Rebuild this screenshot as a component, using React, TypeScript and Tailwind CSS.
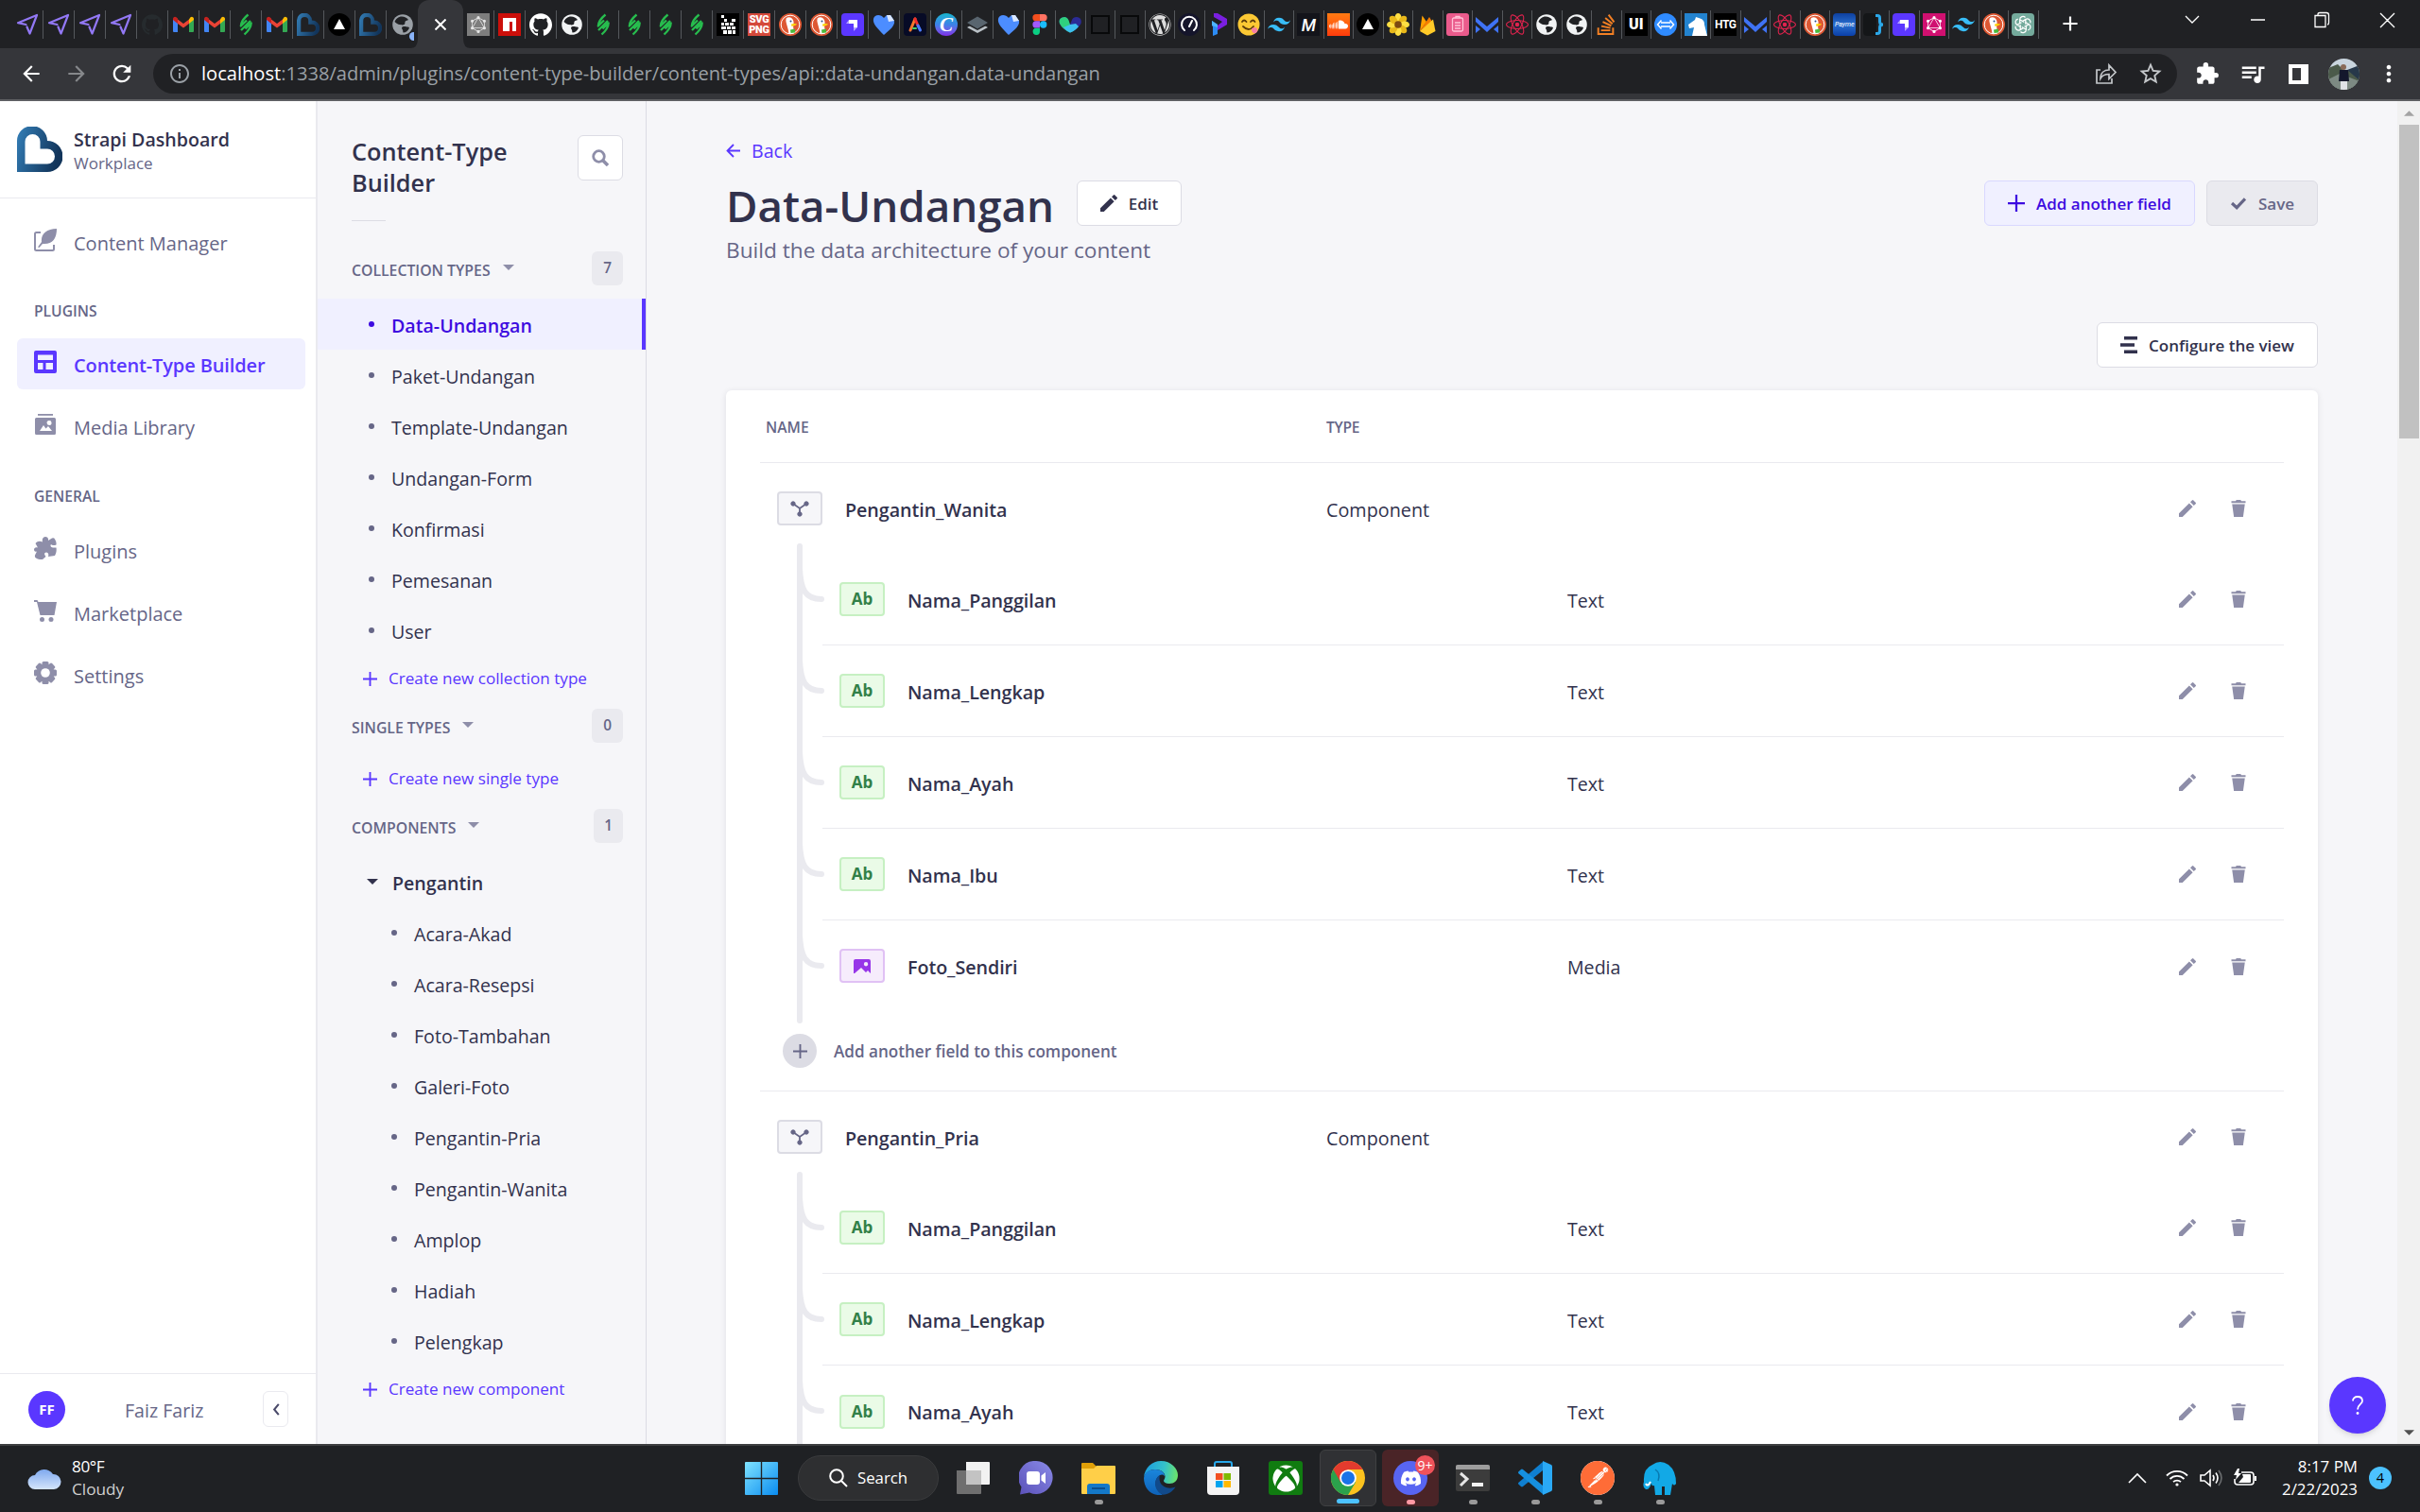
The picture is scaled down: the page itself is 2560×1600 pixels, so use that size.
import React from "react";
import {
  SiGraphql, SiGithub, SiTailwindcss, SiReact, SiStackoverflow,
  SiSoundcloud, SiPostman,
} from "react-icons/si";
import { FaWordpress, FaXbox, FaDiscord } from "react-icons/fa";
import {
  MdExtension, MdQueueMusic, MdStarBorder, MdOutlineInfo, MdArrowBack, MdArrowForward, MdRefresh,
  MdMoreVert, MdAdd,
} from "react-icons/md";

/* ---------- favicons ---------- */

const Vector = ({ vb = "0 0 24 24", className = "size-6", children }: { vb?: string; className?: string; children: React.ReactNode }) => (
  <svg viewBox={vb} className={className} fill="none">{children}</svg>
);

const Plane = () => (
  <Vector><path d="M10.500 12 2 10.200 22 2 14.500 21.500 11.500 14.500" stroke="#9278f5" strokeWidth="2.200" strokeLinejoin="round" strokeLinecap="round" /></Vector>
);
const Gmail = () => (
  <Vector>
    <path d="M1 6v13a1 1 0 0 0 1 1h4V10z" fill="#4285f4" />
    <path d="M23 6v13a1 1 0 0 1-1 1h-4V10z" fill="#34a853" />
    <path d="M18 6.500V11l5-4V6c0-2-2-3-3.500-1.800z" fill="#fbbc04" />
    <path d="M6 6.500l6 4.500 6-4.500V11l-6 4.600L6 11z" fill="#ea4335" />
    <path d="M1 7V6c0-2 2-3 3.500-1.800L6 5.500V11z" fill="#c5221f" />
  </Vector>
);
const Stripes = () => (
  <Vector>
    <path d="M14.500 1.500C9 6 7 9 6.800 13.500l6.200-6M7 18l10-10M10.500 22.500c5-4.500 7-7.500 7.200-12l-6.200 6" stroke="#27bd4e" strokeWidth="2.300" strokeLinejoin="round" />
  </Vector>
);
const BLogo = ({ className = "size-6" }: { className?: string }) => (
  <Vector vb="0 0 48 48" className={className}>
    <defs>
      <linearGradient id="blogo" x1="0" y1="0" x2="1" y2="0.300">
        <stop offset="0" stopColor="#347fb8" /><stop offset="1" stopColor="#12355b" />
      </linearGradient>
    </defs>
    <path fillRule="evenodd" fill="url(#blogo)" d="M0 48V15.500a16 16 0 0 1 32-.5 16.500 16.500 0 0 1 0 33zM8.500 39.500H32a8 8 0 0 0 0-16h-7.500V16a8 8 0 0 0-16 0z" />
  </Vector>
);
const Vercel = () => (
  <Vector><circle cx="12" cy="12" r="12" fill="#000" /><path d="M12 6l6 11H6z" fill="#fff" /></Vector>
);
const Globe = ({ dim = false }: { dim?: boolean }) => (
  <div className={dim ? "text-[#9aa0a6]" : "text-[#f1f3f4]"}>
    <Vector>
      <circle cx="12" cy="12" r="10.800" fill="currentColor" />
      <path d="M11 3.500c3 0 5.500 1.500 7 3.500-1 1-3 .5-3.500 2s.5 2-1 3-4 0-5 0-4-2-5-3c1-3 4-5.500 7.500-5.500zM13 14c2 0 6 .5 6 1.500-1 3-4 5-6.500 5C12 19 12.500 18 11.500 17s-.5-3 1.500-3z" fill="#202124" />
    </Vector>
  </div>
);
const LoadingGlobe = () => (
  <div className="relative"><Globe dim /><span className="absolute right-0 bottom-[-5px] h-[9px] w-[5px] rounded-l-full bg-[#8ab4f8]" /></div>
);
const Tile = ({ className, children }: { className: string; children?: React.ReactNode }) => (
  <div className={"flex size-6 items-center justify-center overflow-hidden " + className}>{children}</div>
);
const Npm = () => (
  <Tile className="bg-[#cb0f0a]"><svg viewBox="0 0 24 24" className="size-6"><path d="M5 5h14v14h-4V9h-3v10H5z" fill="#fff" /></svg></Tile>
);
const Blocks = () => (
  <Tile className="bg-black">
    <svg viewBox="0 0 24 24" className="size-6" fill="#fff">
      <path d="M5 2h3v3H5zM8 6h3v3H8zM5 10h3v3H5zM9 10h4v3H9zM14 10h4v3h-4zM16 6h4v3h-4zM5 14h5v3H5zM11 14h4v3h-4zM16 14h4v3h-4zM7 18h4v4H7zM12 18h4v4h-4zM17 18h3v4h-3z" />
    </svg>
  </Tile>
);
const SvgPng = () => (
  <Tile className="flex-col bg-[#d4493b] font-['Roboto'] text-[11px] leading-[11px] font-black tracking-[-0.3px] text-white"><span>SVG</span><span>PNG</span></Tile>
);
const Duck = () => (
  <Vector>
    <circle cx="12" cy="12" r="12" fill="#de5833" />
    <circle cx="12" cy="12" r="9.800" stroke="#fff" strokeWidth="1" />
    <path d="M8 5c3-2 7 0 7.500 4 .3 3-.5 4-.3 6l1 6c-2 1-4 1-5.700.5C10 17 8 12 7.500 9c-.2-2 0-3 .5-4z" fill="#fff" />
    <path d="M13 11.500c2-1 5-.5 6 0-1 1.500-3 1.500-5.500 2.500z" fill="#fdd20a" />
    <path d="M12 17.500l5-1v4l-4.500.5z" fill="#4cba3c" />
    <circle cx="12.500" cy="8.500" r="1" fill="#2d4f8e" />
  </Vector>
);
const Strapi = () => (
  <Tile className="rounded-[4px] bg-[#5b37ff]">
    <svg viewBox="0 0 24 24" className="size-6"><path d="M8 7h9v8h-4v-4H8z" fill="#fff" /><path d="M8 7v4H5zM13 15h4l-4 4z" fill="#b4a3ff" /></svg>
  </Tile>
);
const BlueHeart = () => (
  <Vector><path d="M12 23C5 16 0 11 1 6c1-5 8-5 11-1l3-3h4l4 6c1 5-4 9-11 15z" fill="#4c8dff" /><path d="M15 2h4l4 6-6 1z" fill="#dbe8ff" /></Vector>
);
const AdobeA = () => (
  <Tile className="rounded-[4px] bg-[#070b26]">
    <svg viewBox="0 0 24 24" className="size-6" fill="none" strokeWidth="3" strokeLinecap="round">
      <path d="M12 6 7 18" stroke="#f9772a" /><path d="M12 6l3 7" stroke="#f02c2c" /><path d="M15 13l2.500 5" stroke="#4a7dff" /><path d="M10 16h3" stroke="#43d06c" strokeWidth="2" />
    </svg>
  </Tile>
);
const Canva = () => (
  <Tile className="rounded-full bg-linear-to-b from-[#13b5cd] via-[#3b82e8] to-[#7d2ae8] font-['Liberation_Serif'] text-[21px] leading-none font-bold text-white italic">C</Tile>
);
const Layers = () => (
  <Vector><path d="M1 15l11-6 11 6-11 6z" fill="#b9c0c6" /><path d="M0 11.500 12 5l12 6.500L12 18z" fill="#202124" /><path d="M1 10l11-6.500L23 10l-11 6.500z" fill="#59656f" /></Vector>
);
const Figma = () => (
  <Vector>
    <path d="M8 1h4v7.300H8A3.600 3.600 0 0 1 8 1z" fill="#f24e1e" /><path d="M12 1h4a3.600 3.600 0 0 1 0 7.300h-4z" fill="#ff7262" />
    <path d="M8 8.300h4v7.300H8a3.600 3.600 0 0 1 0-7.300z" fill="#a259ff" /><circle cx="15.700" cy="12" r="3.700" fill="#1abcfe" />
    <path d="M8 15.700h4v3.600a3.700 3.700 0 1 1-4-3.600z" fill="#0acf83" />
  </Vector>
);
const GreenHeart = () => (
  <Vector>
    <path d="M6 4q3 0 4 3l2 5 2-5q1-3 5-3 6 1 4.500 7Q20 17 12 20.500 4 17 1 11-1 5 6 4z" fill="#2b2b96" />
    <path d="M6 4q3 0 4.500 3.500L12 12l5 5.500q-2 2-5 3Q4 17 1 11-1 5 6 4z" fill="#2fd07e" />
    <path d="M5 15l7-3 6-1 3 3q-3 4-9 6.500-5-2.500-7-5.500z" fill="#3dbff0" />
  </Vector>
);
const DarkBox = () => <div className="h-5 w-5 border-2 border-[#08090a] bg-[#202124]" />;
const Gauge = () => (
  <Tile className="rounded-full bg-[#15152b]">
    <svg viewBox="0 0 24 24" className="size-6" fill="none" stroke="#fff" strokeWidth="2"><path d="M7 18a8 8 0 1 1 10 0M12 14l3-6" strokeLinecap="round" /></svg>
  </Tile>
);
const PMark = () => (
  <Vector><path d="M6 0h4l10 6v6L10 18v-5l5-4-9-5z" fill="#7a1fe0" /><path d="M4 8l6 4v10l-5 2V14l-1-1z" fill="#2c8cf4" /><path d="M4 8l6 4v3l-6-2z" fill="#4db4ff" /></Vector>
);
const Smile = () => (
  <Vector>
    <circle cx="12" cy="12" r="11.500" fill="#fcc934" />
    <path d="M5 9q2-3 4.500 0M14 9q2.500-3 4.500 0M6 14q6 6 11 0" stroke="#5c3d0b" strokeWidth="1.800" strokeLinecap="round" />
    <path d="M15 16l4-1c3 1 3 5 0 6s-4-2-4-5z" fill="#f47ea5" />
  </Vector>
);
const MTile = () => <Tile className="bg-[#13141a] font-['Roboto'] text-[18px] font-medium tracking-tight text-white italic">M</Tile>;
const Soundcloud = () => <Tile className="bg-linear-to-b from-[#ff7a12] to-[#ff3a0c]"><SiSoundcloud className="size-5 text-white" /></Tile>;
const Flower = () => (
  <Vector>
    {[0, 45, 90, 135, 180, 225, 270, 315].map((a) => (
      <ellipse key={a} cx="12" cy="5" rx="3.600" ry="5" fill={a % 90 ? "#e8b81a" : "#ffdf43"} transform={`rotate(${a} 12 12)`} />
    ))}
    <circle cx="12" cy="12" r="3.800" fill="#7c4a12" />
  </Vector>
);
const Firebase = () => (
  <Vector><path d="M4 19L6.500 2.500 11 9z" fill="#ffa000" /><path d="M4 19L14 4l3 5z" fill="#f57c00" /><path d="M4 19L18 6.500 20.500 19 12 23.500z" fill="#ffca28" /></Vector>
);
const Clipboard = () => (
  <Tile className="rounded-[3px] bg-[#ea5b8c]">
    <svg viewBox="0 0 24 24" className="size-6" fill="none" stroke="#ffc4d8" strokeWidth="1.300"><rect x="6.500" y="5" width="11" height="14" rx="1.500" /><path d="M10 5V3.500h4V5M9 10h6M9 13h6M9 16h6" /></svg>
  </Tile>
);
const BlueM = () => (
  <Vector><path d="M0 4l12 10L24 4v5L12 20 0 9z" fill="#3f73f5" /><path d="M0 13l5 4-5 4zM24 13l-5 4 5 4z" fill="#3f73f5" /></Vector>
);
const ReactPink = () => <SiReact className="size-6 text-[#e0234e]" />;
const UiTile = () => <Tile className="bg-black font-['Roboto'] text-[16px] font-black text-white">UI</Tile>;
const Arrows = () => (
  <Tile className="rounded-full bg-[#2f8bff]"><svg viewBox="0 0 24 24" className="size-6" fill="none" stroke="#fff" strokeWidth="1.500"><path d="M7 10h10M7 14h10M7.500 7.500 3.500 12l4 4.500M16.500 7.500l4 4.500-4 4.500" /></svg></Tile>
);
const Bear = () => (
  <Tile className="bg-[#2383cf]"><svg viewBox="0 0 24 24" className="size-6" fill="#fff"><path d="M4 12l7-5 1-3 3 1c4 1 6 3 6 7l3 12H8l2-9-5 1z" /></svg></Tile>
);
const Htg = () => <Tile className="bg-black font-['Roboto'] text-[12px] font-bold tracking-[-0.5px] text-white">HTG</Tile>;
const Payme = () => <Tile className="rounded-[4px] bg-linear-to-b from-[#0e3f9e] via-[#2a6fd0] to-[#0b3fa8] font-['Roboto'] text-[7px] text-white italic">Payme</Tile>;
const Brace = () => (
  <Tile className="rounded-l-[4px] bg-linear-to-r from-[#141618] from-60% to-[#202124] to-60%">
    <svg viewBox="0 0 24 24" className="size-6" fill="none" stroke="#2ba7e8" strokeWidth="3"><path d="M13 2.500h2q2.500 0 2.500 2.500v4q0 3 3.500 3-3.500 0-3.500 3v4q0 2.500-2.500 2.500h-2" /></svg>
  </Tile>
);
const OpenAi = () => (
  <Tile className="rounded-[4px] bg-[#74aa9c]">
    <svg viewBox="0 0 24 24" className="size-5" fill="none" stroke="#fff" strokeWidth="1.500">
      {[0, 60, 120, 180, 240, 300].map((a) => <path key={a} transform={`rotate(${a} 12 12)`} d="M8 10.500V5.500a4 4 0 0 1 7-2.500M8 5.800l5.500 3.200" />)}
    </svg>
  </Tile>
);

const tabsLeft = [Plane, Plane, Plane, Plane, () => <SiGithub className="size-[22px] text-[#262b2e]" />, Gmail, Gmail, Stripes, Gmail, BLogo, Vercel, BLogo, LoadingGlobe];
const tabsMiddle = [
  () => <Tile className="bg-[#7d7d7d]"><SiGraphql className="size-[18px] text-white/80" /></Tile>,
  Npm, () => <SiGithub className="size-6 text-white" />, Globe, Stripes, Stripes, Stripes, Stripes, Blocks, SvgPng, Duck, Duck, Strapi, BlueHeart, AdobeA, Canva, Layers, BlueHeart, Figma,
];
const tabsRight = [
  GreenHeart, DarkBox, DarkBox, () => <FaWordpress className="size-6 text-[#dcdcdc]" />, Gauge, PMark, Smile,
  () => <SiTailwindcss className="size-6 text-[#38bdf8]" />, MTile, Soundcloud, Vercel, Flower, Firebase, Clipboard, BlueM, ReactPink, Globe, Globe,
  () => <SiStackoverflow className="size-[22px] text-[#f48024]" />, UiTile, Arrows, Bear, Htg, BlueM, ReactPink, Duck, Payme, Brace, Strapi,
  () => <Tile className="bg-[#d01070]"><SiGraphql className="size-[18px] text-white" /></Tile>,
  () => <SiTailwindcss className="size-6 text-[#38bdf8]" />, Duck, OpenAi,
];

function Tab({ icon: Icon, narrow = false, last = false }: { icon: React.ComponentType<any>; narrow?: boolean; last?: boolean }) {
  return (
    <div className={"flex h-[30px] shrink-0 items-center justify-center " + (narrow ? "w-[31.5px] " : "w-[33px] ") + (last ? "" : "border-r border-[#55585c]")}>
      <Icon />
    </div>
  );
}

function Browser() {
  return (
    <header className="shrink-0 text-white">
      <div className="flex h-[51px] items-start bg-[#202124] pl-[13px]">
        <div className="flex pt-[11px]">{tabsLeft.map((I, i) => <Tab key={i} icon={I} last={i === 12} />)}</div>
        <div className="relative flex h-[51px] w-[48px] shrink-0 items-center justify-center rounded-t-[12px] bg-[#35363a]">
          <svg viewBox="0 0 64 12" className="absolute -left-2 bottom-0 h-3 w-16" fill="#35363a"><path d="M0 12q8 0 8-10v10zM64 12q-8 0-8-10v10z" /></svg>
          <svg viewBox="0 0 12 12" className="size-3" stroke="#fff" strokeWidth="2"><path d="M.5.5l11 11M11.500.5l-11 11" /></svg>
        </div>
        <div className="flex pt-[11px]">{tabsMiddle.map((I, i) => <Tab key={i} icon={I} />)}</div>
        <div className="flex pt-[11px]">{tabsRight.map((I, i) => <Tab key={i} icon={I} narrow />)}</div>
        <MdAdd className="mt-[12px] ml-[20px] size-[26px]" />
        <svg viewBox="0 0 224 18" className="mt-[12px] ml-[108px] h-[18px] w-[224px]" fill="none" stroke="#fff" strokeWidth="1.300">
          <path d="M1 5l7 7 7-7M70 9h15M138 4.500h11v12h-11zM141 4V3q0-1.500 2-1.500h7q2.500 0 2.500 2.500v8q0 2-1.500 2M207 2l15 15M222 2l-15 15" />
        </svg>
      </div>
      <div className="flex h-[54px] items-center bg-[#35363a] pl-5">
        <MdArrowBack className="size-[26px]" />
        <MdArrowForward className="ml-[22px] size-[26px] text-[#86888b]" />
        <MdRefresh className="ml-[21px] size-[28px]" />
        <div className="ml-[19px] flex h-[42px] w-[2141px] items-center rounded-full bg-[#202124] pr-[14px] pl-[16px]">
          <MdOutlineInfo className="size-6 text-[#9aa0a6]" />
          <div className="ml-[11px] flex-1 pt-px text-[20.100px] text-[#9aa0a6]"><span className="text-white">localhost</span>:1338/admin/plugins/content-type-builder/content-types/api::data-undangan.data-undangan</div>
          <svg viewBox="0 0 24 24" className="size-6" fill="none" stroke="#c4c7ca" strokeWidth="1.700"><path d="M6 8H2v14h16v-5M6 17c0-6 4-9 9-9V3l7 7.500-7 7v-5c-4 0-7 1-9 4.500z" /></svg>
          <MdStarBorder className="ml-[21px] size-[28px] text-[#c4c7ca]" />
        </div>
        <MdExtension className="ml-[19px] size-[26px]" />
        <MdQueueMusic className="ml-[20px] size-[30px]" />
        <div className="ml-[23px] size-[21px] border-4 border-r-8 border-white" />
        <svg viewBox="0 0 33 33" className="ml-[21px] size-[33px] rounded-full bg-[#c9d5de]">
          <path d="M0 10l10-4 8 8 15-6v25H0z" fill="#4b5a4a" /><path d="M20 12l13-5v16z" fill="#27384a" /><path d="M0 22l12-6 21 8v9H0z" fill="#7d8a83" />
          <circle cx="16" cy="9" r="3" fill="#8a6b58" /><path d="M12 12h9l1 12H11z" fill="#14182c" /><path d="M13 24h7v9h-7z" fill="#dfe2e6" />
        </svg>
        <MdMoreVert className="ml-[17px] size-[28px]" />
      </div>
      <div className="h-0.5 bg-[#5f6063]" />
    </header>
  );
}

/* ---------- app icons ---------- */

const Pencil = ({ className }: { className: string }) => (
  <svg viewBox="0 0 24 24" className={className} fill="currentColor"><path d="M0 19v5h5L19.500 9.500l-5-5zM16 3l5 5 2.500-2.500q1-1 0-2L20.500.5q-1-1-2 0z" /></svg>
);
const Trash = ({ className }: { className: string }) => (
  <svg viewBox="0 0 24 24" className={className} fill="currentColor"><path d="M2 1.500h6L9 0h6l1 1.500h6v2.700H2zM3 6h18l-2.500 18h-13z" /></svg>
);
const Plus = ({ className }: { className: string }) => (
  <svg viewBox="0 0 16 16" className={className} fill="currentColor"><path d="M7 0h2v7h7v2H9v7H7V9H0V7h7z" /></svg>
);
const Caret = ({ className }: { className: string }) => (
  <svg viewBox="0 0 12 6" className={className} fill="currentColor"><path d="M0 0h12L6 6z" /></svg>
);
const Feather = () => (
  <Vector className="size-6"><path d="M7 4H2.500Q1 4 1 5.500v16Q1 23 2.500 23h17q1.500 0 1.500-1.500V17" stroke="currentColor" strokeWidth="2" /><path d="M24 0c0 11-5 17-15 16l-3.500 4L4 19.500 8 14C7 6 13 0 24 0z" fill="currentColor" /></Vector>
);
const LayoutIcon = () => (
  <Vector className="size-6"><path fillRule="evenodd" fill="currentColor" d="M2 0h20q2 0 2 2v20q0 2-2 2H2q-2 0-2-2V2Q0 0 2 0zm2 4.500v5.500h16V4.500zM4 13v7h5.500v-7zm8.500 0v7H20v-7z" /></Vector>
);
const Media = () => (
  <Vector className="size-6"><path d="M4 1h16v1.800H4z" fill="currentColor" /><path fillRule="evenodd" fill="currentColor" d="M2.500 5h19q1.500 0 1.500 1.500v15q0 1.500-1.500 1.500h-19Q1 23 1 21.500v-15Q1 5 2.500 5zM6 19h13l-4-5-2.500 2.500L10 13zM16 8a2.500 2.500 0 1 0 .1 5A2.500 2.500 0 0 0 16 8z" /></Vector>
);
const Puzzle = () => (
  <Vector className="size-6">
    <path fill="currentColor" d="M9 5.500C8 2 10 0 12 0s3.500 1.500 3 4l4-2.500q2-1 3 1 2 3 1.500 6c-2.500 1-4.500.5-5.500-.5-1.500 2 0 4 5.500 3.500.5 3 0 6-1.500 8.500l-7 1c1-3-.5-4.500-2-4.500s-2.500 1.500-1.500 3l1 1.500L9 24q-4 .5-7-1.500-1.500-1-1-3l2-4C1 16.500 0 15 0 13.500S1.500 10.500 4 11.500L1.500 7 3 5.500q3-1.500 6 0z" />
  </Vector>
);
const Cart = () => (
  <Vector className="size-6"><path d="M0 1h3.500l1 2H24l-2.500 14H6.500L3 3H0z" fill="currentColor" /><circle cx="8.500" cy="21.500" r="2.500" fill="currentColor" /><circle cx="18" cy="21.500" r="2.500" fill="currentColor" /></Vector>
);
const Gear = () => (
  <Vector className="size-6">
    <g fill="currentColor">{[0, 45, 90, 135].map((a) => <rect key={a} x="8.500" y="0" width="7" height="24" rx="1.500" transform={`rotate(${a} 12 12)`} />)}<circle cx="12" cy="12" r="9.500" /></g>
    <circle cx="12" cy="12" r="4.800" fill="#fff" />
  </Vector>
);

/* ---------- left navigation ---------- */

function NavItem({ icon: Icon, label, active = false }: { icon: React.ComponentType; label: string; active?: boolean }) {
  return (
    <div className={"flex h-[54px] items-center rounded-[6px] pl-[18px] " + (active ? "bg-[#f0f0ff] font-semibold" : "text-[#666687]")}>
      <div className={"mb-1 flex w-6 justify-center " + (active ? "text-[#5a37ff]" : "text-[#8e8ea9]")}><Icon /></div>
      <span className={"ml-[18px] pt-[3px] text-[20px] " + (active ? "text-[#5a37ff] tracking-[-0.120px]" : "")}>{label}</span>
    </div>
  );
}

function MainNav() {
  return (
    <nav className="flex w-[336px] shrink-0 flex-col border-r-2 border-[#eaeaef] bg-white">
      <div className="flex h-[103px] shrink-0 items-center border-b border-[#eaeaef] pl-[18px]">
        <BLogo className="size-12" />
        <div className="ml-3 pt-[3px]">
          <div className="text-[19.600px] leading-[26px] font-semibold text-[#32324d]">Strapi Dashboard</div>
          <div className="text-[17px] leading-6 text-[#666687]">Workplace</div>
        </div>
      </div>
      <div className="flex flex-1 flex-col px-[18px] pt-[19px] pr-[11px]">
        <NavItem icon={Feather} label="Content Manager" />
        <div className="mt-[34px] mb-[17px] pl-[18px] text-[15.600px] leading-[24px] font-semibold text-[#666687]">PLUGINS</div>
        <NavItem icon={LayoutIcon} label="Content-Type Builder" active />
        <div className="h-3" />
        <NavItem icon={Media} label="Media Library" />
        <div className="mt-[35px] mb-[18px] pl-[18px] text-[15.600px] leading-[24px] font-semibold text-[#666687]">GENERAL</div>
        <div className="flex flex-col gap-3">
          <NavItem icon={Puzzle} label="Plugins" />
          <NavItem icon={Cart} label="Marketplace" />
          <NavItem icon={Gear} label="Settings" />
        </div>
      </div>
      <div className="flex h-[75px] shrink-0 items-center border-t border-[#eaeaef] pl-[30px]">
        <div className="flex size-[39px] items-center justify-center rounded-full bg-[#5a37ff] pt-px text-[15px] font-bold text-white">FF</div>
        <span className="ml-[63px] w-[146px] pt-[3px] text-[19.600px] text-[#666687]">Faiz Fariz</span>
        <div className="flex h-[38px] w-[27px] items-center justify-center rounded-[6px] border border-[#eaeaef]">
          <svg viewBox="0 0 8 14" className="h-[13px] w-2" fill="none" stroke="#4a4a6a" strokeWidth="2.200"><path d="M7 1L2 7l5 6" /></svg>
        </div>
      </div>
    </nav>
  );
}

/* ---------- content type list ---------- */

function SubHeader({ title, count }: { title: string; count: string }) {
  return (
    <div className="flex h-9 items-center pr-6 pl-9">
      <span className="pt-[5px] text-[15.800px] font-semibold text-[#666687]">{title}</span>
      <Caret className="mb-[3px] ml-[13px] h-1.5 w-[12px] text-[#8e8ea9]" />
      <span className={"ml-auto flex h-9 items-center rounded-[6px] bg-[#eaeaef] text-[15.400px] font-semibold text-[#666687] " + (count === "1" ? "px-[11px]" : "px-3")}>{count}</span>
    </div>
  );
}
function SubItem({ label, active = false, nested = false }: { label: string; active?: boolean; nested?: boolean }) {
  return (
    <div className={"flex h-[54px] items-center " + (nested ? "pl-[78px] " : "pl-[54px] ") + (active ? "border-r-4 border-[#5a37ff] bg-[#f0f0ff] font-semibold text-[#3d0be0]" : "text-[#32324d]")}>
      <span className={"mb-px size-1.5 rounded-full " + (active ? "bg-[#3d0be0]" : "bg-[#666687]")} />
      <span className="ml-[18px] pt-1 text-[19.600px]">{label}</span>
    </div>
  );
}
function Create({ label, className }: { label: string; className: string }) {
  return (
    <div className={"flex h-6 items-center pl-12 text-[#5a37ff] " + className}>
      <Plus className="size-[15px]" /><span className="ml-3 text-[17.100px]">{label}</span>
    </div>
  );
}
function SubNav() {
  return (
    <aside className="flex w-[348px] shrink-0 flex-col border-r border-[#dcdce4] bg-[#f6f6f9]">
      <div className="flex justify-between pt-9 pr-6 pl-9">
        <h2 className="w-[200px] pt-px text-[25.300px] leading-[33px] font-semibold text-[#32324d]">Content-Type Builder</h2>
        <div className="flex size-12 items-center justify-center rounded-[6px] border border-[#dcdce4] bg-white text-[#8e8ea9]">
          <svg viewBox="0 0 18 18" className="size-[18px]" fill="none" stroke="currentColor"><circle cx="7.500" cy="7.500" r="5.800" strokeWidth="2.800" /><path d="M12 12l5 5" strokeWidth="3.500" /></svg>
        </div>
      </div>
      <div className="mt-[23px] ml-9 h-px w-9 shrink-0 bg-[#dcdce4]" />
      <div className="mt-8"><SubHeader title="COLLECTION TYPES" count="7" /></div>
      <div className="mt-[14px]">
        <SubItem label="Data-Undangan" active />
        {["Paket-Undangan", "Template-Undangan", "Undangan-Form", "Konfirmasi", "Pemesanan", "User"].map((l) => <SubItem key={l} label={l} />)}
      </div>
      <Create label="Create new collection type" className="mt-[12px]" />
      <div className="mt-5"><SubHeader title="SINGLE TYPES" count="0" /></div>
      <Create label="Create new single type" className="mt-[26px]" />
      <div className="mt-5"><SubHeader title="COMPONENTS" count="1" /></div>
      <div className="mt-[14px] flex h-[54px] items-center pl-[52px]">
        <Caret className="h-1.5 w-[12px] text-[#32324d]" /><span className="ml-[15px] pt-1 text-[19.600px] font-semibold text-[#32324d]">Pengantin</span>
      </div>
      {["Acara-Akad", "Acara-Resepsi", "Foto-Tambahan", "Galeri-Foto", "Pengantin-Pria", "Pengantin-Wanita", "Amplop", "Hadiah", "Pelengkap"].map((l) => <SubItem key={l} label={l} nested />)}
      <Create label="Create new component" className="mt-[12px]" />
    </aside>
  );
}

/* ---------- main table ---------- */

function Actions() {
  return (
    <div className="ml-auto flex w-[111px] items-center text-[#8e8ea9]"><Pencil className="size-[18px]" /><Trash className="ml-[36px] size-[18px]" /></div>
  );
}
function FieldRow({ name, media = false, last = false }: { name: string; media?: boolean; last?: boolean }) {
  return (
    <div className="flex h-[97px]">
      <svg viewBox="0 0 24 97" className="-mr-[3px] h-[97px] w-6 shrink-0 overflow-visible" fill="none"><path d="M-3 16C-2 38 3 48 20 48" stroke="#eaeaef" strokeWidth="6" strokeLinecap="round" /></svg>
      <div className={"flex flex-1 items-center pl-[18px] " + (last ? "" : "border-b border-[#eaeaef]")}>
        {media ? (
          <div className="mb-px flex h-9 w-12 items-center justify-center rounded-[4px] border-2 border-[#e0c1f4] bg-[#f6ecfc]">
            <svg viewBox="0 0 18 15" className="h-[15px] w-[18px]"><path fillRule="evenodd" fill="#9736e8" d="M2 0h14q2 0 2 2v13l-3-3-2 2-5-5-7 6H0V2Q0 0 2 0zm11 3a2.200 2.200 0 1 0 .1 4.400A2.200 2.200 0 0 0 13 3z" /></svg>
          </div>
        ) : (
          <div className="flex h-9 w-12 items-center justify-center rounded-[4px] border-2 border-[#c6f0c2] bg-[#eafbe7] text-[17px] font-bold text-[#328048]">Ab</div>
        )}
        <span className="ml-6 w-[698px] pt-[3px] text-[19.700px] font-semibold tracking-[-0.050px] text-[#32324d]">{name}</span>
        <span className="pt-[3px] text-[19.600px] text-[#32324d]">{media ? "Media" : "Text"}</span>
        <Actions />
      </div>
    </div>
  );
}
function ComponentBlock({ name, fields, addRow = true }: { name: string; fields: string[]; addRow?: boolean }) {
  return (
    <section>
      <div className="flex h-[96px] items-center pl-[18px]">
        <div className="flex h-9 w-12 items-center justify-center rounded-[4px] border-2 border-[#dcdce4] bg-[#f6f6f9]">
          <svg viewBox="0 0 20 17" className="h-[17px] w-5" fill="#666687" stroke="#666687"><circle cx="3" cy="3" r="2.200" /><circle cx="17" cy="3" r="2.200" /><circle cx="10" cy="14" r="2.200" /><path d="M3 3l7 5 7-5M10 8v6" fill="none" strokeWidth="1.800" /></svg>
        </div>
        <span className="ml-6 w-[509px] pt-[4px] text-[19.700px] font-semibold tracking-[-0.050px] text-[#32324d]">{name}</span>
        <span className="pt-[4px] text-[19.800px] text-[#32324d]">Component</span>
        <Actions />
      </div>
      <div className="flex pl-[39px]">
        <div className="-mt-[11px] -mb-[12px] w-1.5 shrink-0 rounded-full bg-[#eaeaef]" />
        <div className="flex-1">{fields.map((f, i) => <FieldRow key={f} name={f} media={f === "Foto_Sendiri"} last={i === fields.length - 1} />)}</div>
      </div>
      {addRow && (
        <div className="flex h-[84px] items-center border-b border-[#eaeaef] pl-6">
          <div className="mb-px flex size-9 items-center justify-center rounded-full bg-[#dcdce4] text-[#666687]"><Plus className="size-[15px]" /></div>
          <span className="ml-[18px] pt-px text-[17.100px] font-semibold text-[#666687]">Add another field to this component</span>
        </div>
      )}
    </section>
  );
}

const fields = ["Nama_Panggilan", "Nama_Lengkap", "Nama_Ayah", "Nama_Ibu", "Foto_Sendiri"];

function Main() {
  return (
    <main className="relative flex-1 overflow-hidden bg-[#f6f6f9] pr-[84px] pl-[84px]">
      <div className="mt-[40px] flex h-6 items-center text-[#5a37ff]">
        <svg viewBox="0 0 15 15" className="size-[15px]" fill="none" stroke="currentColor" strokeWidth="1.800"><path d="M15 7.500H1.500M8 1L1.500 7.500 8 14" /></svg>
        <span className="ml-3 pt-px text-[19.600px]">Back</span>
      </div>
      <div className="mt-5 flex h-12 items-center">
        <h1 className="w-[371px] pt-[5px] text-[45.700px] leading-none font-semibold whitespace-nowrap text-[#32324d]"><span>Data-Undangan</span></h1>
        <div className="flex h-12 w-[111px] items-center justify-center gap-3 rounded-[6px] border border-[#dcdce4] bg-white text-[#32324d]"><Pencil className="size-[18px]" /><span className="pt-px text-[17px] font-semibold">Edit</span></div>
        <div className="ml-auto flex h-12 w-[223px] items-center justify-center gap-3 rounded-[6px] border border-[#d9d8ff] bg-[#f0f0ff] text-[#3d0be0]"><Plus className="size-[18px]" /><span className="pt-px text-[17px] font-semibold">Add another field</span></div>
        <div className="ml-3 flex h-12 w-[118px] items-center justify-center gap-3 rounded-[6px] border border-[#dcdce4] bg-[#eaeaef] text-[#666687]">
          <svg viewBox="0 0 18 14" className="h-[13px] w-[18px]" fill="none" stroke="currentColor" strokeWidth="3.400"><path d="M1.500 6.500L7 11.500 16.500 1.500" /></svg>
          <span className="pt-px text-[17px] font-semibold">Save</span>
        </div>
      </div>
      <p className="mt-[9px] text-[22.650px] leading-[34px] text-[#666687]">Build the data architecture of your content</p>
      <div className="mt-[59px] flex justify-end">
        <div className="flex h-12 w-[234px] items-center justify-center gap-3 rounded-[6px] border border-[#dcdce4] bg-white text-[#32324d]">
          <svg viewBox="0 0 18 18" className="size-[18px]" fill="currentColor"><path d="M4 0h14v3.500H4zM0 7.300h15v3.400H0zM4 14.500h14V18H4z" /></svg>
          <span className="pt-px text-[17px] font-semibold">Configure the view</span>
        </div>
      </div>
      <div className="mt-6 rounded-[6px] bg-white px-9 shadow-[0_1px_6px_rgba(33,33,52,0.1)]">
        <div className="flex h-[77px] items-center border-b border-[#eaeaef] pt-1 pl-1.5 text-[15.600px] font-semibold text-[#666687]"><span className="w-[593px]">NAME</span><span className="tracking-[-0.300px]">TYPE</span></div>
        <ComponentBlock name="Pengantin_Wanita" fields={fields} />
        <ComponentBlock name="Pengantin_Pria" fields={fields.slice(0, 3)} addRow={false} />
      </div>
      <div className="absolute right-3 bottom-[11px] flex size-[60px] items-center justify-center rounded-full bg-[#5a37ff] shadow-md">
        <svg viewBox="0 0 12 20" className="h-5 w-3" fill="none" stroke="#fff" strokeWidth="1.800"><path d="M1 5.500C1 2.500 3 1 6 1s5 1.800 5 4.500C11 9 6 9 6 14.500" /><circle cx="6" cy="18.500" r="1.400" fill="#fff" stroke="none" /></svg>
      </div>
    </main>
  );
}

/* ---------- taskbar ---------- */

function AppButton({ children, dot = "", tile = "" }: { children: React.ReactNode; dot?: string; tile?: string }) {
  return (
    <div className={"relative flex h-[60px] w-[60px] flex-col items-center justify-center rounded-[6px] " + tile}>
      {children}
      {dot && <span className={"absolute bottom-0.5 h-[5px] rounded-full " + dot} />}
    </div>
  );
}
const grayDot = "w-[9px] bg-[#9a9a9a]";

function Taskbar() {
  return (
    <footer className="flex h-[72px] shrink-0 items-center border-t-2 border-[#3d3e40] bg-[#1f2124] pb-0.5 text-white">
      <div className="flex w-[775px] items-center pl-[29px]">
        <svg viewBox="0 0 36 24" className="h-6 w-9">
          <defs><linearGradient id="cl" x1="0" y1="0" x2="0" y2="1"><stop offset="0" stopColor="#7fa9ee" /><stop offset="1" stopColor="#d4e5fc" /></linearGradient></defs>
          <path d="M8 24a7.500 7.500 0 0 1 0-15A11 11 0 0 1 27 8a8 8 0 0 1 1 16z" fill="url(#cl)" />
        </svg>
        <div className="ml-[11px] text-[17.200px] leading-6"><div className="tracking-[-0.400px]">80°F</div><div className="text-[#d0d0d0]">Cloudy</div></div>
      </div>
      <div className="flex items-center gap-1.5">
        <AppButton><svg viewBox="0 0 36 36" className="size-[35px]"><defs><linearGradient id="wn" x1="0" y1="0" x2="1" y2="1"><stop offset="0" stopColor="#7fe3ff" /><stop offset="1" stopColor="#0a8cf0" /></linearGradient></defs><path fill="url(#wn)" d="M0 1q0-1 1-1h16.300v17.300H0zM18.700 0H35q1 0 1 1v16.300H18.700zM0 18.700h17.300V36H1q-1 0-1-1zM18.700 18.700H36V35q0 1-1 1H18.700z" /></svg></AppButton>
        <div className="mr-[1px] ml-[3px] flex h-12 w-[149px] items-center gap-2.5 rounded-full border border-[#3a3b3d] bg-[#2e2f31] pl-[32px]">
          <svg viewBox="0 0 20 20" className="size-5" fill="none" stroke="#fff" strokeWidth="2"><circle cx="8" cy="8" r="6.800" /><path d="M13 13l6 6" /></svg>
          <span className="text-[16.800px]">Search</span>
        </div>
        <AppButton><svg viewBox="0 0 36 36" className="size-9"><path d="M10 1h24q1 0 1 1v22q0 1-1 1H10z" fill="#f2f2f2" /><path d="M0 10h26v24q0 1-1 1H1q-1 0-1-1z" fill="#6f6f6f" /><path d="M10 10h16v15H10z" fill="#c3c3c3" /></svg></AppButton>
        <AppButton><svg viewBox="0 0 36 36" className="size-9"><defs><linearGradient id="ch" x1="1" y1="0" x2="0" y2="1"><stop offset="0" stopColor="#8a8be8" /><stop offset="1" stopColor="#5a50b8" /></linearGradient></defs><path d="M18 0a17.500 17.500 0 1 1-7 33.500L1 35.500l1.500-8A17.500 17.500 0 0 1 18 0z" fill="url(#ch)" /><rect x="8" y="11" width="14" height="14" rx="3" fill="#fff" /><path d="M23.500 15.500L28 12v12l-4.500-3.500z" fill="#fff" /></svg></AppButton>
        <AppButton dot={grayDot}><svg viewBox="0 0 36 36" className="size-9"><path d="M0 3q0-1 1-1h11l4 4-4 5H0z" fill="#e0a008" /><path d="M0 8h13l3-3h19q1 0 1 1v28q0 1-1 1H1q-1 0-1-1z" fill="#ffcf48" /><path d="M6 35V27q0-3 3-3h18q3 0 3 3v8z" fill="#1478c8" /><path d="M11 29h14" stroke="#0a4f8f" strokeWidth="2" /></svg></AppButton>
        <AppButton>
          <svg viewBox="0 0 36 36" className="size-9">
            <defs>
              <linearGradient id="eg" x1="0" y1="0.300" x2="1" y2="0.400"><stop offset="0" stopColor="#1b9de0" /><stop offset=".6" stopColor="#35c1c9" /><stop offset="1" stopColor="#6be36c" /></linearGradient>
              <linearGradient id="eb" x1="0" y1="0" x2="0" y2="1"><stop offset="0" stopColor="#1a86dc" /><stop offset="1" stopColor="#0e62b8" /></linearGradient>
            </defs>
            <path d="M0 17C1 7 9 0 18 0c11 0 18 8 18 15 0 6-4 9-9 9-4 0-6-1.500-6-3 0-1 1.500-2 1.500-4.500C22.500 12 18 9 12 9 6 9 2 12 0 17z" fill="url(#eg)" />
            <path d="M0 18C1 12 6 9 12 9c6 0 10 3 10 7-1-1.500-3-2-5-1-6 3-7 15 3 20.800C8 38 0 29 0 18z" fill="url(#eb)" />
            <path d="M17 15c-7 4-7 16 3 20.800 6 0 11-4 13.500-8.300-7 3-17 0-17-9 0-1.500.2-2.500.5-3.500z" fill="#114a8b" />
          </svg>
        </AppButton>
        <AppButton><svg viewBox="0 0 36 36" className="size-9"><path d="M9 7V3q0-2 2-2h14q2 0 2 2v4" fill="none" stroke="#28a8ea" strokeWidth="2" /><path d="M1 6h34v26q0 4-4 4H5q-4 0-4-4z" fill="#f4f4f4" /><path d="M10 13h7.500v7H10z" fill="#f25022" /><path d="M18.500 13H26v7h-7.500z" fill="#7fba00" /><path d="M10 21h7.500v7H10z" fill="#00a4ef" /><path d="M18.500 21H26v7h-7.500z" fill="#ffb900" /></svg></AppButton>
        <AppButton><div className="flex size-9 items-center justify-center rounded-[3px] bg-[#107c10]"><FaXbox className="size-[29px]" /></div></AppButton>
        <AppButton dot="w-6 bg-[#4cc2ff]" tile="border border-[#3f4042] bg-[#303134]">
          <svg viewBox="0 0 36 36" className="size-9"><circle cx="18" cy="18" r="18" fill="#fcc31e" /><path d="M2.400 9A18 18 0 0 1 33.600 9H18z" fill="#e33b2e" /><path d="M18 18L2.400 9A18 18 0 0 0 18 36l8-13.500z" fill="#2ba24c" /><path d="M2.400 9l7.800 13.500L18 9z" fill="#e33b2e" /><circle cx="18" cy="18" r="8.800" fill="#fff" /><circle cx="18" cy="18" r="7" fill="#1a73e8" /></svg>
        </AppButton>
        <AppButton dot="w-[9px] bg-[#ff99a4]" tile="bg-[#4a2427]">
          <div className="flex size-9 items-center justify-center rounded-full bg-[#5865f2]"><FaDiscord className="size-[23px]" /></div>
          <span className="absolute top-1.5 right-1 flex size-[21px] items-center justify-center rounded-full bg-[#f0525a] text-[14px]">9+</span>
        </AppButton>
        <AppButton dot={grayDot}><svg viewBox="0 0 36 28" className="h-7 w-9"><rect width="36" height="28" rx="2" fill="#3c3c3c" /><path d="M0 2q0-2 2-2h32q2 0 2 2v3H0z" fill="#9d9d9d" /><path d="M5 9l7 6-7 7" fill="none" stroke="#e6e6e6" strokeWidth="3" /><path d="M17 19h12v4H17z" fill="#f2f2f2" /></svg></AppButton>
        <AppButton dot={grayDot}><svg viewBox="0 0 36 36" className="size-9"><path d="M26 1v9L5 27q-1 .8-2 0l-2.500-2.200q-1-1 0-2z" fill="#0f7fd0" /><path d="M26 35v-9L5 9q-1-.8-2 0L.5 11.200q-1 1 0 2z" fill="#1590e0" /><path d="M26 0l9 4q1 .5 1 2v24q0 1.500-1 2l-9 4z" fill="#2aa9f5" /></svg></AppButton>
        <AppButton dot={grayDot}><div className="flex size-9 items-center justify-center rounded-full bg-white"><SiPostman className="size-9 text-[#ff6c37]" /></div></AppButton>
        <AppButton dot={grayDot}><svg viewBox="0 0 36 36" className="size-9"><path d="M10 4Q18-2 27 4q8 6 8 20-2 3-4 0l-2 12h-6v-9h-3v9h-7l-1-10q-3 1-3-3-2 8-6 7-4-2-2-8Q0 8 10 4z" fill="#12a9e6" /><path d="M3 24q2 4 5-2" stroke="#fff" strokeWidth="2" fill="none" /><path d="M13 9q6 4 3 12" stroke="#0879b0" strokeWidth="1.500" fill="none" /></svg></AppButton>
      </div>
      <div className="ml-auto flex items-center pr-[30px]">
        <svg viewBox="0 0 20 12" className="h-3 w-5" fill="none" stroke="#fff" strokeWidth="1.600"><path d="M1 11l9-9 9 9" /></svg>
        <svg viewBox="0 0 24 18" className="ml-5 h-[18px] w-6" fill="none" stroke="#fff" strokeWidth="1.800"><path d="M1 6.500a15.500 15.500 0 0 1 22 0M4.500 10a10.500 10.500 0 0 1 15 0M8 13.200a5.800 5.800 0 0 1 8 0" /><circle cx="12" cy="16" r="1.600" fill="#fff" stroke="none" /></svg>
        <svg viewBox="0 0 24 20" className="ml-3 h-5 w-6" fill="none" stroke="#fff" strokeWidth="1.600"><path d="M1 7h4l6-5v16l-6-5H1zM14 7q2 3 0 6M17 4.500q4 5.500 0 11" /><path d="M20 2q6 8 0 16" stroke="#6a6c6e" /></svg>
        <svg viewBox="0 0 24 20" className="ml-3 h-5 w-6" fill="none" stroke="#fff" strokeWidth="1.600"><path d="M8 4h10q3 0 3 3v7q0 3-3 3H4q-3 0-3-3v-3" /><path d="M9 6h8q1 0 1 1v7q0 1-1 1H5l5-6zM22 8h2v5h-2z" fill="#fff" stroke="none" /><path d="M4 0L0 7h3l-1 5 6-7H5l1-5z" fill="#fff" stroke="none" /></svg>
        <div className="ml-[27px] text-right text-[16.900px] leading-6"><div>8:17 PM</div><div>2/22/2023</div></div>
        <div className="ml-3 flex size-6 items-center justify-center rounded-full bg-[#4cc2ff] text-[14.500px] text-black">4</div>
      </div>
    </footer>
  );
}

export default function App() {
  return (
    <div className="flex h-[1600px] w-[2560px] flex-col overflow-hidden font-['Open_Sans','Noto_Sans',sans-serif]">
      <Browser />
      <div className="flex min-h-0 flex-1">
        <MainNav />
        <SubNav />
        <Main />
        <div className="flex w-6 shrink-0 flex-col items-center bg-[#f1f1f1] text-[#505050]">
          <Caret className="mt-[10px] h-1.5 w-[11px] rotate-180 text-[#a3a3a3]" />
          <div className="mt-[9px] h-[332px] w-[21px] bg-[#c1c1c1]" />
          <Caret className="mt-auto mb-[9px] h-1.5 w-[11px]" />
        </div>
      </div>
      <Taskbar />
    </div>
  );
}
